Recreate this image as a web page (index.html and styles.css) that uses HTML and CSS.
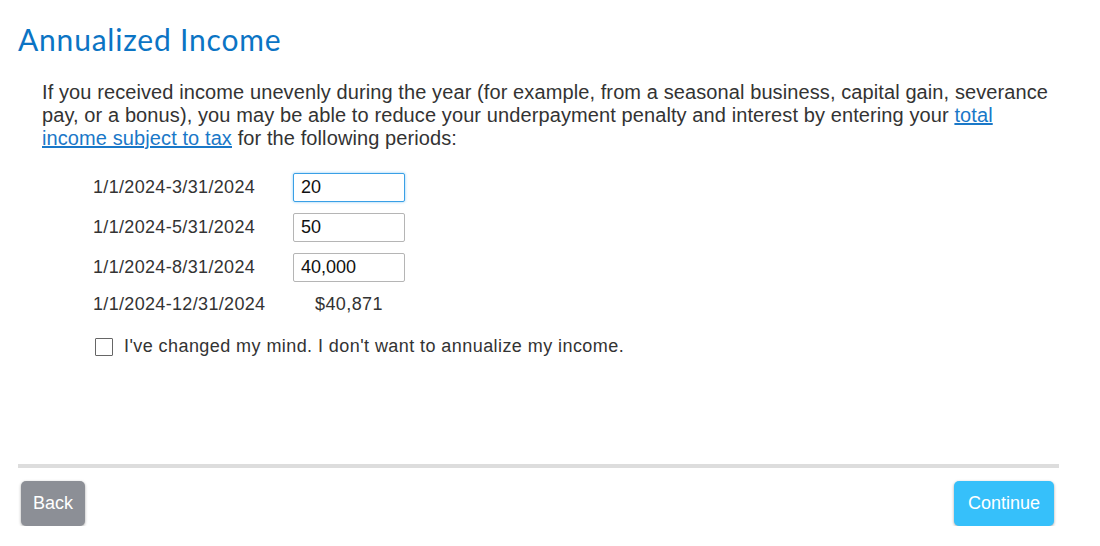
FILE: index.html
```html
<!DOCTYPE html>
<html lang="en">
<head>
    <meta charset="UTF-8">
    <title>Annualized Income</title>
    <link rel="stylesheet" href="styles.css">
</head>
<body>
    <div class="page">
        <h1>Annualized Income</h1>
        <p class="intro">If you received income unevenly during the year (for example, from a seasonal business, capital gain, severance pay, or a bonus), you may be able to reduce your underpayment penalty and interest by entering your <a href="#">total income subject to tax</a> for the following periods:</p>

        <div class="periods">
            <div class="period">
                <label for="p1">1/1/2024-3/31/2024</label>
                <input type="text" id="p1" class="focus" value="20">
            </div>
            <div class="period">
                <label for="p2">1/1/2024-5/31/2024</label>
                <input type="text" id="p2" value="50">
            </div>
            <div class="period">
                <label for="p3">1/1/2024-8/31/2024</label>
                <input type="text" id="p3" value="40,000">
            </div>
            <div class="period total">
                <span class="label">1/1/2024-12/31/2024</span>
                <span class="amount">$40,871</span>
            </div>
        </div>

        <label class="check">
            <span class="box"></span>
            I've changed my mind. I don't want to annualize my income.
        </label>

        <div class="footer">
            <button type="button" class="btn back">Back</button>
            <button type="button" class="btn continue">Continue</button>
        </div>
    </div>
</body>
</html>
```

FILE: styles.css
```css
body {
    margin: 0;
    font-family: "Liberation Sans", Arial, sans-serif;
    color: #333;
    background: #fff;
}
.page {
    width: 1041px;
    padding: 21px 0 0 18px;
}
h1 {
    margin: 0;
    font-family: Lato, "Noto Sans", sans-serif;
    font-weight: 400;
    font-size: 30px;
    letter-spacing: 0.8px;
    color: #0b74c4;
    line-height: 36px;
}
.intro {
    margin: 24px 0 0 24px;
    max-width: 1008px;
    font-size: 20px;
    letter-spacing: 0.1px;
    line-height: 23px;
}
.intro a {
    color: #1a78c8;
}
.periods {
    margin: 23px 0 0 75px;
    display: flex;
    flex-direction: column;
    gap: 11px;
}
.period {
    display: flex;
    align-items: center;
    font-size: 18px;
    letter-spacing: 0.33px;
}
.period label, .period .label {
    width: 200px;
}
.period input {
    width: 112px;
    height: 29px;
    box-sizing: border-box;
    border: 1px solid #b5b5b5;
    border-radius: 2px;
    padding: 0 7px;
    font-family: "Liberation Sans", Arial, sans-serif;
    font-size: 18px;
    letter-spacing: 0;
    color: #111;
    outline: none;
}
.period input.focus {
    border-color: #3aa0e6;
    box-shadow: 0 0 3px #8ccaf3;
}
.period.total {
    margin-top: 1px;
}
.period.total .amount {
    padding-left: 22px;
    letter-spacing: 0.4px;
}
.check {
    display: flex;
    align-items: center;
    gap: 11px;
    margin: 21px 0 0 77px;
    font-size: 18px;
    letter-spacing: 0.43px;
}
.box {
    width: 16px;
    height: 16px;
    border: 1px solid #666;
    border-radius: 1px;
}
.footer {
    margin-top: 107px;
    border-top: 4px solid #dddddd;
    padding-top: 13px;
    display: flex;
    justify-content: space-between;
}
.btn {
    height: 45px;
    border: none;
    border-radius: 5px;
    color: #fff;
    font-family: "Liberation Sans", Arial, sans-serif;
    font-size: 18px;
    box-shadow: 0 1px 3px rgba(0, 0, 0, 0.35);
    cursor: pointer;
}
.back {
    margin-left: 3px;
    width: 64px;
    background: #8c8f96;
}
.continue {
    margin-right: 5px;
    width: 100px;
    background: #36c0fa;
}
```
